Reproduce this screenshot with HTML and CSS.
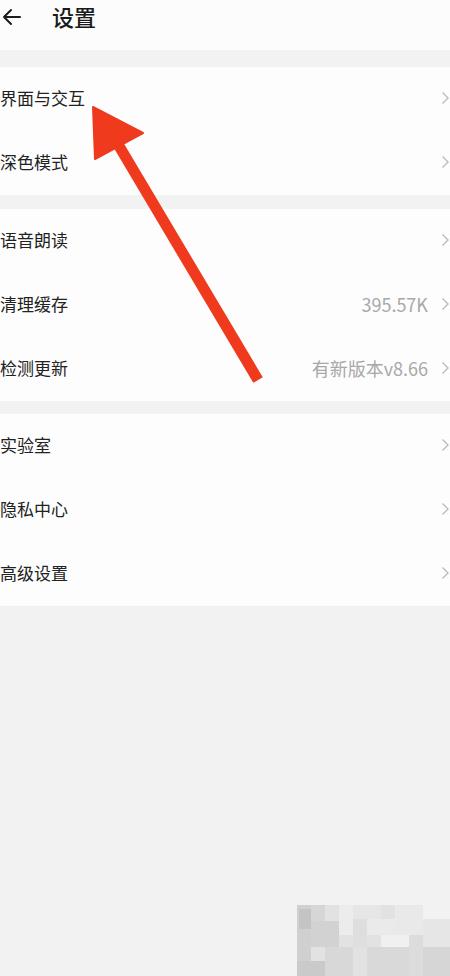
FILE: index.html
```html
<!DOCTYPE html>
<html lang="zh">
<head>
<meta charset="utf-8">
<title>设置</title>
<link rel="stylesheet" href="styles.css">
</head>
<body>
<div class="page">
  <header class="topbar">
    <svg class="back" width="20" height="20" viewBox="0 0 20 20"><path d="M19 10H3M10 3L3 10L10 17" fill="none" stroke="#1c1c1c" stroke-width="2" stroke-linecap="round" stroke-linejoin="round"/></svg>
    <h1 class="title">设置</h1>
  </header>

  <section class="card card-first">
    <div class="row"><span class="label">界面与交互</span><span class="fill"></span><svg class="chev" width="9" height="14" viewBox="0 0 9 14"><path d="M1.5 1.5L7 7L1.5 12.5" fill="none" stroke="#bcbcbc" stroke-width="1.4"/></svg></div>
    <div class="row"><span class="label">深色模式</span><span class="fill"></span><svg class="chev" width="9" height="14" viewBox="0 0 9 14"><path d="M1.5 1.5L7 7L1.5 12.5" fill="none" stroke="#bcbcbc" stroke-width="1.4"/></svg></div>
  </section>

  <section class="card card-second">
    <div class="row"><span class="label">语音朗读</span><span class="fill"></span><svg class="chev" width="9" height="14" viewBox="0 0 9 14"><path d="M1.5 1.5L7 7L1.5 12.5" fill="none" stroke="#bcbcbc" stroke-width="1.4"/></svg></div>
    <div class="row"><span class="label">清理缓存</span><span class="fill"></span><span class="value">395.57K</span><svg class="chev" width="9" height="14" viewBox="0 0 9 14"><path d="M1.5 1.5L7 7L1.5 12.5" fill="none" stroke="#bcbcbc" stroke-width="1.4"/></svg></div>
    <div class="row"><span class="label">检测更新</span><span class="fill"></span><span class="value">有新版本v8.66</span><svg class="chev" width="9" height="14" viewBox="0 0 9 14"><path d="M1.5 1.5L7 7L1.5 12.5" fill="none" stroke="#bcbcbc" stroke-width="1.4"/></svg></div>
  </section>

  <section class="card card-third">
    <div class="row"><span class="label">实验室</span><span class="fill"></span><svg class="chev" width="9" height="14" viewBox="0 0 9 14"><path d="M1.5 1.5L7 7L1.5 12.5" fill="none" stroke="#bcbcbc" stroke-width="1.4"/></svg></div>
    <div class="row"><span class="label">隐私中心</span><span class="fill"></span><svg class="chev" width="9" height="14" viewBox="0 0 9 14"><path d="M1.5 1.5L7 7L1.5 12.5" fill="none" stroke="#bcbcbc" stroke-width="1.4"/></svg></div>
    <div class="row"><span class="label">高级设置</span><span class="fill"></span><svg class="chev" width="9" height="14" viewBox="0 0 9 14"><path d="M1.5 1.5L7 7L1.5 12.5" fill="none" stroke="#bcbcbc" stroke-width="1.4"/></svg></div>
  </section>

  <svg class="annot" width="450" height="976" viewBox="0 0 450 976">
    <line x1="119" y1="146" x2="258" y2="380" stroke="#ef3a1e" stroke-width="11"/>
    <polygon points="93,107 95,159 143,133" fill="#ef3a1e" stroke="#ef3a1e" stroke-width="2" stroke-linejoin="round"/>
  </svg>

  <svg class="mosaic" width="153" height="72" viewBox="0 0 153 72">
    <rect x="0" y="0" width="153" height="72" fill="#e2e2e2"/>
    <rect x="0" y="0" width="14" height="72" fill="#d0d0d0"/>
    <rect x="2" y="4" width="12" height="20" fill="#c4c4c4"/>
    <rect x="14" y="0" width="14" height="16" fill="#d6d6d6"/>
    <rect x="14" y="16" width="28" height="26" fill="#d2d2d2"/>
    <rect x="28" y="42" width="28" height="30" fill="#d8d8d8"/>
    <rect x="42" y="0" width="14" height="30" fill="#ececec"/>
    <rect x="56" y="0" width="28" height="14" fill="#e6e6e6"/>
    <rect x="56" y="14" width="14" height="28" fill="#dedede"/>
    <rect x="70" y="14" width="28" height="16" fill="#eaeaea"/>
    <rect x="84" y="30" width="28" height="12" fill="#f0f0f0"/>
    <rect x="70" y="42" width="42" height="30" fill="#d9d9d9"/>
    <rect x="98" y="0" width="28" height="30" fill="#e9e9e9"/>
    <rect x="112" y="30" width="14" height="42" fill="#dcdcdc"/>
    <rect x="126" y="0" width="27" height="14" fill="#f2f2f2"/>
    <rect x="126" y="14" width="27" height="28" fill="#e6e6e6"/>
    <rect x="126" y="42" width="27" height="30" fill="#d6d6d6"/>
    <rect x="0" y="56" width="28" height="16" fill="#cacaca"/>
  </svg>
</div>
</body>
</html>
```

FILE: styles.css
```css
html, body {
  margin: 0;
  padding: 0;
}
body {
  background: #f2f2f2;
  font-family: "Noto Sans CJK SC", "Noto Sans", "Liberation Sans", sans-serif;
  color: #222;
  overflow: hidden;
}
.page {
  position: relative;
  width: 450px;
  height: 976px;
  overflow: hidden;
}
.topbar {
  height: 50px;
  background: #fcfcfc;
  display: flex;
  align-items: center;
  padding-left: 1px;
}
.back {
  flex: none;
  margin-top: -16px;
}
.title {
  margin: -18px 0 0 31px;
  font-size: 22px;
  font-weight: 500;
  color: #1a1a1a;
  line-height: 1;
}
.card {
  background: #fdfdfd;
  display: flex;
  flex-direction: column;
}
.card-first { margin-top: 17px; }
.card-second { margin-top: 14px; }
.card-third { margin-top: 13px; }
.row {
  height: 64px;
  box-sizing: border-box;
  padding-bottom: 3px;
  display: flex;
  align-items: center;
  padding-left: 0;
}
.label {
  font-size: 17px;
  color: #222;
  line-height: 1;
}
.fill { flex: 1; }
.value {
  font-size: 18px;
  color: #a8a8a8;
  line-height: 1;
}
.chev {
  flex: none;
  margin-left: 13px;
}
.annot {
  position: absolute;
  left: 0;
  top: 0;
  pointer-events: none;
}
.mosaic {
  position: absolute;
  left: 297px;
  top: 905px;
}
```
